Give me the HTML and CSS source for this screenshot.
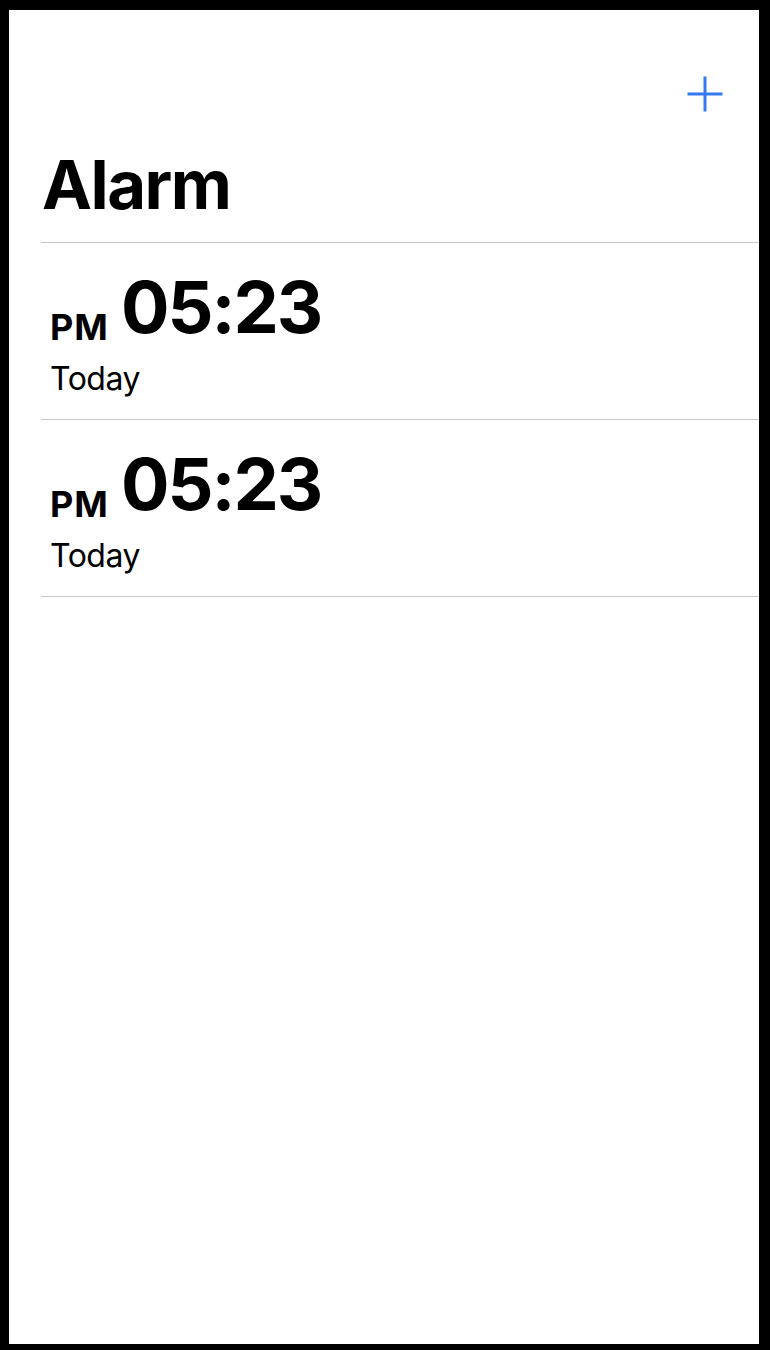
FILE: index.html
```html
<!DOCTYPE html>
<html lang="en">
<head>
    <meta charset="UTF-8">
    <meta name="viewport" content="width=device-width, initial-scale=1.0">
    <title>Alarm</title>
    <link rel="stylesheet" href="styles.css">
</head>
<body>
    <div class="screen">
        <div class="nav">
            <button class="add-button" aria-label="Add alarm">
                <svg width="36" height="36" viewBox="0 0 36 36">
                    <line x1="18" y1="0.5" x2="18" y2="35.5" stroke="#3478f6" stroke-width="3"/>
                    <line x1="0.5" y1="18" x2="35.5" y2="18" stroke="#3478f6" stroke-width="3"/>
                </svg>
            </button>
        </div>
        <h1 class="title">Alarm</h1>
        <ul class="alarm-list">
            <li class="alarm-row">
                <div class="time-line">
                    <span class="meridiem">PM</span>
                    <span class="time">05:23</span>
                </div>
                <div class="label">Today</div>
            </li>
            <li class="alarm-row">
                <div class="time-line">
                    <span class="meridiem">PM</span>
                    <span class="time">05:23</span>
                </div>
                <div class="label">Today</div>
            </li>
        </ul>
    </div>
</body>
</html>
```

FILE: styles.css
```css
html, body {
    margin: 0;
    padding: 0;
    background-color: #000;
}
body {
    padding: 10px 0 0 9px;
    font-family: Inter, 'Liberation Sans', sans-serif;
    color: #000;
}
.screen {
    width: 750px;
    height: 1334px;
    background-color: #fff;
    overflow: hidden;
}
.nav {
    height: 136px;
    box-sizing: border-box;
    padding: 66px 36px 0 0;
    display: flex;
    justify-content: flex-end;
    align-items: flex-start;
}
.add-button {
    background: none;
    border: none;
    padding: 0;
    width: 36px;
    height: 36px;
    cursor: pointer;
}
.add-button svg {
    display: block;
}
.title {
    margin: 0 0 18px 33px;
    font-size: 67px;
    line-height: 78px;
    font-weight: bold;
    letter-spacing: -1.5px;
}
.alarm-list {
    list-style: none;
    margin: 0 0 0 32px;
    padding: 0;
    border-top: 1px solid #c8c7cc;
}
.alarm-row {
    padding: 21px 0 21px 9px;
    border-bottom: 1px solid #c8c7cc;
}
.time-line {
    display: flex;
    align-items: flex-end;
    gap: 12px;
}
.meridiem {
    font-size: 36px;
    line-height: 46px;
    font-weight: bold;
    letter-spacing: 1px;
}
.time {
    font-size: 72px;
    line-height: 86px;
    font-weight: bold;
    letter-spacing: -2px;
}
.label {
    margin-top: 10px;
    font-size: 32px;
    line-height: 38px;
    letter-spacing: -0.5px;
}
```
